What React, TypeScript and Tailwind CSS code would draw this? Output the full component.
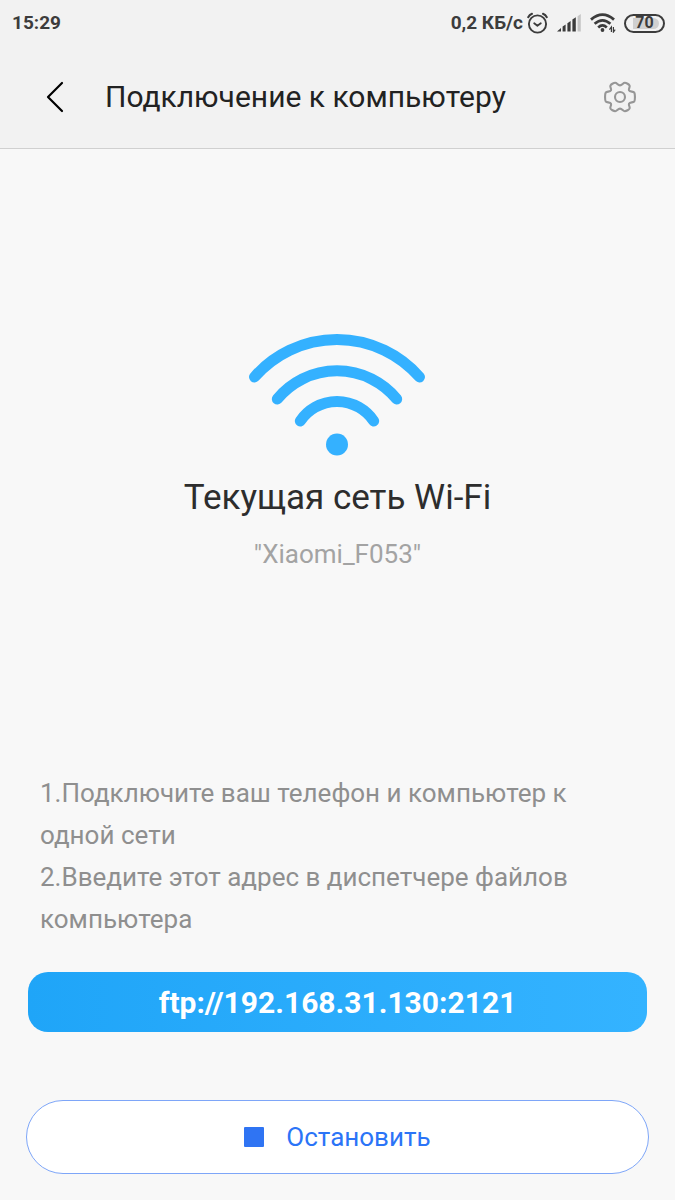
import type { ReactNode } from 'react'

const steps = [
  '1.Подключите ваш телефон и компьютер к одной сети',
  '2.Введите этот адрес в диспетчере файлов компьютера',
]

function AlarmIcon() {
  return (
    <svg width="22" height="22" viewBox="0 0 22 22" fill="none" stroke="#3c3c3c" strokeLinecap="round">
      <circle cx="10.5" cy="12" r="8.6" strokeWidth="1.9" />
      <path d="M7.2 11.2 10.4 13.8 13.8 11.2" strokeWidth="1.8" strokeLinejoin="round" />
      <path d="M1.2 5.2Q2.4 2.8 5 1.8M19.8 5.2Q18.6 2.8 16 1.8" strokeWidth="2" />
    </svg>
  )
}

function SignalIcon() {
  return (
    <svg width="25" height="18" viewBox="0 0 25 18" fill="#3c3c3c">
      <path d="M0 17.4 4 14V17.4Z" />
      <path d="M5.6 12.6 8.6 10.4V17.4H5.6Z" />
      <path d="M10.4 9.2 13.6 7V17.4H10.4Z" />
      <path d="M15.4 5.6 18.8 3.2V17.4H15.4Z" />
      <path d="M20.6 2.2 23.8 0V17.4H20.6Z" fill="#c6c6c6" />
    </svg>
  )
}

function StatusWifiIcon() {
  return (
    <svg width="26" height="20" viewBox="0 0 26 20" fill="none" stroke="#3c3c3c">
      <path d="M1 6.6Q12.5 -3.4 24 6.6" strokeWidth="2.8" />
      <path d="M4.6 10.8Q12.5 3.8 20.4 10.8" strokeWidth="2.7" />
      <path d="M8.2 14.4Q12.5 10.4 16.8 14.4" strokeWidth="2.7" />
      <circle cx="12.5" cy="17" r="1.9" fill="#3c3c3c" stroke="none" />
      <path d="M21.4 19V14L19.4 16.6M23.4 14V19L25.2 16.6" strokeWidth="1.2" />
    </svg>
  )
}

function Battery({ level }: { level: number }) {
  return (
    <div className="relative flex h-[19px] w-[41px] items-center justify-center rounded-full border-2 border-[#3c3c3c]">
      <div className="absolute inset-y-[2px] right-1 rounded-r-full bg-[#d0d0d0]" style={{ width: `${level}%` }} />
      <span className="relative text-base leading-none font-bold">{level}</span>
    </div>
  )
}

function GearIcon() {
  return (
    <svg width="32" height="32" viewBox="0 0 32 32" fill="none" stroke="#969696" strokeWidth="2.1" strokeLinejoin="round">
      <path d="M16 4.4C18.2 4.4 19 1.8 20.8 1.8C22.4 1.8 25 3.4 25.6 4.6C26.2 6 24.4 7.6 25 9.2C25.8 11 29 10.2 30.2 11.4C31.2 12.8 31.2 19.2 30.2 20.6C29 21.8 25.8 21 25 22.8C24.4 24.4 26.2 26 25.6 27.4C25 28.6 22.4 30.2 20.8 30.2C19 30.2 18.2 27.6 16 27.6C13.8 27.6 13 30.2 11.2 30.2C9.6 30.2 7 28.6 6.4 27.4C5.8 26 7.6 24.4 7 22.8C6.2 21 3 21.8 1.8 20.6C0.8 19.2 0.8 12.8 1.8 11.4C3 10.2 6.2 11 7 9.2C7.6 7.6 5.8 6 6.4 4.6C7 3.4 9.6 1.8 11.2 1.8C13 1.8 13.8 4.4 16 4.4Z" />
      <circle cx="16" cy="16" r="5" />
    </svg>
  )
}

function WifiLogo() {
  return (
    <svg width="177" height="122" viewBox="0 0 177 122" fill="none" stroke="#34b1ff" strokeWidth="11" strokeLinecap="round">
      <path d="M5.5 43A109.5 109.5 0 0 1 170.5 43" />
      <path d="M28.3 65A77.4 77.4 0 0 1 147.7 65" />
      <path d="M51.3 87A44.3 44.3 0 0 1 124.7 87" />
      <circle cx="88" cy="110.5" r="11" fill="#34b1ff" stroke="none" />
    </svg>
  )
}

function IconButton({ label, children }: { label: string; children: ReactNode }) {
  return (
    <button type="button" aria-label={label} className="flex size-8 items-center justify-center">
      {children}
    </button>
  )
}

export default function App() {
  return (
    <div className="flex min-h-screen flex-col bg-[#f8f8f8] font-[Roboto,sans-serif]">
      <header className="border-b border-[#d0d0d0] bg-[#f2f2f2]">
        {/* Status bar */}
        <div className="flex h-[46px] items-center justify-between pr-[10px] pl-3 text-[19px] font-bold text-[#3c3c3c]">
          <span>15:29</span>
          <div className="flex items-center">
            <span className="mr-1">0,2 КБ/с</span>
            <AlarmIcon />
            <div className="ml-2 flex items-center gap-2">
              <SignalIcon />
              <StatusWifiIcon />
              <Battery level={70} />
            </div>
          </div>
        </div>
        {/* Title bar */}
        <div className="flex h-[102px] items-center px-[39px]">
          <IconButton label="Назад">
            <svg width="20" height="32" viewBox="0 0 20 32" fill="none" stroke="#000" strokeWidth="2.2" strokeLinecap="round" strokeLinejoin="round">
              <path d="M17 2 3 16 17 30" />
            </svg>
          </IconButton>
          <h1 className="ml-[34px] flex-1 text-3xl text-[#222]">Подключение к компьютеру</h1>
          <IconButton label="Настройки">
            <GearIcon />
          </IconButton>
        </div>
      </header>

      <main className="flex flex-1 flex-col pb-[26px]">
        <section className="flex flex-1 flex-col items-center justify-center pb-4">
          <WifiLogo />
          <h2 className="mt-5 text-[35px] leading-[44px] text-[#2d2d2d]">Текущая сеть Wi-Fi</h2>
          <p className="mt-4 text-[26px] leading-9 text-[#a3a3a3]">"Xiaomi_F053"</p>
        </section>

        <ol className="px-10 text-[26px] leading-[42px] text-[#8f8f8f]">
          {steps.map((step) => (
            <li key={step}>{step}</li>
          ))}
        </ol>

        <a
          href="ftp://192.168.31.130:2121"
          className="mx-7 mt-8 flex h-[60px] items-center justify-center rounded-[20px] bg-linear-to-r from-[#1fa5f8] to-[#34b3ff] pt-[2px] text-3xl font-bold text-white"
        >
          ftp://192.168.31.130:2121
        </a>

        <button
          type="button"
          className="mx-[26px] mt-[68px] flex h-[74px] items-center justify-center gap-[22px] rounded-full border border-[#7ea6f8] bg-white text-[26px] text-[#2b74f7]"
        >
          <span className="size-5 rounded-[1px] bg-[#2f74f3]" />
          Остановить
        </button>
      </main>
    </div>
  )
}
